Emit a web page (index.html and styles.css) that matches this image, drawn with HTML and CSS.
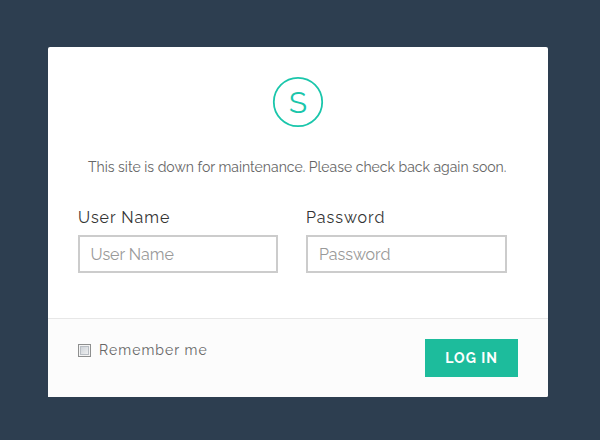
FILE: index.html
```html
<!DOCTYPE html>
<html lang="en">
<head>
<meta charset="utf-8">
<title>Maintenance</title>
<link rel="stylesheet" href="styles.css">
</head>
<body>
<form class="card">
  <div class="main">
    <svg class="logo" width="52" height="52" viewBox="0 0 52 52">
      <circle cx="26" cy="26" r="24.2" fill="none" stroke="#1ac6ab" stroke-width="1.8"/>
      <text class="logo-letter" x="26" y="36.9" text-anchor="middle" textLength="18" lengthAdjust="spacingAndGlyphs">S</text>
    </svg>
    <p class="message"><span>This site is down for maintenance. Please check back again soon.</span></p>
    <div class="fields">
      <div class="field">
        <label class="label label-user" for="user">User Name</label>
        <input class="input input-user" id="user" type="text" placeholder="User Name">
      </div>
      <div class="field">
        <label class="label label-pass" for="pass">Password</label>
        <input class="input input-pass" id="pass" type="password" placeholder="Password">
      </div>
    </div>
  </div>
  <div class="footer">
    <label class="remember"><input class="check" type="checkbox"><span>Remember me</span></label>
    <button class="login" type="button">LOG IN</button>
  </div>
</form>
</body>
</html>
```
FILE: styles.css
```css
* { box-sizing: border-box; }
body {
  margin: 0;
  padding: 47px 0 0 48px;
  height: 440px;
  background: #2d3e50;
  font-family: Raleway, Lato, sans-serif;
  overflow: hidden;
}
.card {
  width: 500px;
  height: 350px;
  display: flex;
  flex-direction: column;
  background: #fff;
  border-radius: 2px 2px 2px 0;
  overflow: hidden;
}
.main {
  height: 271px;
  padding: 29px 30px 0;
  display: flex;
  flex-direction: column;
}
.logo { align-self: center; flex: none; }
.logo-letter { font-size: 30px; font-weight: 400; fill: #1ac6ab; }
.message {
  margin: 29px 0 0;
  padding-left: 10px;
  line-height: 20px;
  font-size: 14px;
  color: #666;
  white-space: nowrap;
}
.fields {
  display: grid;
  grid-template-columns: 200px 201px;
  column-gap: 28px;
  margin-top: 31px;
}
.field { display: flex; flex-direction: column; }
.label {
  height: 20px;
  line-height: 20px;
  margin-bottom: 7px;
  font-size: 16px;
  letter-spacing: 1px;
  color: #333;
}
.input {
  width: 100%;
  height: 38px;
  margin: 0;
  padding: 0 11px;
  border: 2px solid #ccc;
  border-radius: 0;
  background: #fff;
  font-family: inherit;
  font-size: 16px;
  color: #333;
}
.input-user { padding-left: 10.5px; }
.input::placeholder { color: #999; opacity: 1; }
.footer {
  flex: 1;
  display: flex;
  justify-content: space-between;
  align-items: flex-start;
  padding: 20px 30px 0;
  border-top: 1px solid #e7e7e7;
  background: #fcfcfc;
}
.remember {
  display: flex;
  align-items: center;
  gap: 8px;
  height: 22px;
  font-size: 14px;
  letter-spacing: 1.05px;
  color: #666;
}
.check {
  appearance: none;
  width: 13px;
  height: 13px;
  margin: 1px 0 0;
  border: 1px solid #8e8f8f;
  background: linear-gradient(135deg, #c6ccd3, #f6f6f6);
  box-shadow: inset 0 0 0 1px #f4f4f4, inset 0 0 0 2px #b9bec4;
}
.login {
  width: 93px;
  height: 38px;
  padding: 0;
  border: 0;
  background: #1dbc9c;
  color: #fff;
  font-family: inherit;
  font-size: 14px;
  font-weight: 700;
  letter-spacing: 1px;
}
```
